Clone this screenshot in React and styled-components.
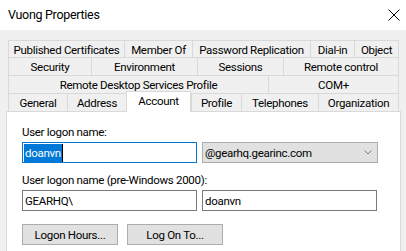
import React from 'react';
import styled, { createGlobalStyle } from 'styled-components';

const GlobalStyle = createGlobalStyle`
  html, body {
    margin: 0;
    padding: 0;
    background: #f0f0f0;
    overflow: hidden;
  }
  body {
    font-family: "Segoe UI", Roboto, "Liberation Sans", Arial, sans-serif;
    font-size: 12px;
    letter-spacing: -0.3px;
    color: #000000;
  }
`;

const Window = styled.div`
  width: 406px;
  height: 251px;
  display: flex;
  flex-direction: column;
  background: #f0f0f0;
  overflow: hidden;
`;

const TitleBar = styled.div`
  height: 30px;
  flex: 0 0 30px;
  display: flex;
  align-items: center;
  justify-content: space-between;
  background: #ffffff;
  padding: 0 6px 0 8px;
  box-sizing: border-box;
`;

const Title = styled.span`
  font-size: 12.5px;
  color: #000000;
  padding-bottom: 1px;
`;

const Body = styled.div`
  flex: 1;
  display: flex;
  flex-direction: column;
  padding: 10px 5px 0 6px;
`;

const TabStrip = styled.div`
  display: flex;
  flex-direction: column;
  margin: 0 2px;
`;

const TabRow = styled.div`
  display: flex;
  height: ${props => props.h}px;
`;

const Tab = styled.div`
  box-sizing: border-box;
  flex: ${props => (props.w ? `0 0 ${props.w}px` : '1 1 0')};
  display: flex;
  align-items: center;
  justify-content: center;
  border-top: 1px solid #d9d9d9;
  border-left: 1px solid #d9d9d9;
  border-right: ${props => (props.last ? '1px solid #d9d9d9' : 'none')};
  background: #f0f0f0;
  white-space: nowrap;
  font-size: 11.5px;
  padding-top: 1px;
`;

const ActiveTab = styled(Tab)`
  position: relative;
  z-index: 1;
  background: #ffffff;
  border-right: 1px solid #d9d9d9;
  margin-top: -2px;
  height: 21px;
  align-items: flex-start;
  padding-top: 2px;
`;

const Panel = styled.div`
  flex: 1;
  background: #ffffff;
  border: 1px solid #d9d9d9;
  border-bottom: none;
  padding: 13px 0 0 15px;
  display: flex;
  flex-direction: column;
`;

const Label = styled.div`
  height: 15px;
  line-height: 15px;
  margin-bottom: ${props => props.mb || 0}px;
  font-size: 11.5px;
`;

const FieldRow = styled.div`
  display: flex;
  gap: 5px;
  margin-bottom: ${props => props.mb || 0}px;
`;

const TextBox = styled.div`
  box-sizing: border-box;
  width: 175px;
  height: 21px;
  border: 1px solid ${props => (props.focused ? '#0078d7' : '#7a7a7a')};
  background: #ffffff;
  display: flex;
  align-items: center;
  padding: 0 1px;
  font-size: 11.5px;
`;

const Selected = styled.span`
  background: #0078d7;
  color: #ffffff;
  height: 18px;
  line-height: 18px;
  padding: 0 1px;
  border-right: 1px solid #000000;
`;

const Plain = styled.span`
  padding-left: 1px;
`;

const Combo = styled.div`
  box-sizing: border-box;
  width: 176px;
  height: 21px;
  border: 1px solid #adadad;
  background: #e1e1e1;
  display: flex;
  align-items: center;
  justify-content: space-between;
  padding: 0 5px 0 2px;
  font-size: 11.5px;
`;

const ButtonRow = styled.div`
  display: flex;
  gap: 9px;
`;

const Button = styled.div`
  box-sizing: border-box;
  width: 96px;
  height: 21px;
  border: 1px solid #adadad;
  background: #e1e1e1;
  display: flex;
  align-items: center;
  justify-content: center;
  font-size: 11.5px;
`;

const rows = [
  { h: 17, tabs: [['Published Certificates', 116], ['Member Of', 68], ['Password Replication', 118], ['Dial-in', 44], ['Object']] },
  { h: 18, tabs: [['Security', 83], ['Environment', 106], ['Sessions', 86], ['Remote control']] },
  { h: 18, tabs: [['Remote Desktop Services Profile', 260], ['COM+']] },
];

const bottomTabs = [['General', 59], ['Address', 59], ['Account', 65], ['Profile', 50], ['Telephones', 77], ['Organization']];

function CloseIcon() {
  return (
    <svg width="12" height="12" viewBox="0 0 12 12">
      <path d="M0.5 0.5 L11.5 11.5 M11.5 0.5 L0.5 11.5" stroke="#000" strokeWidth="1" fill="none" />
    </svg>
  );
}

function Chevron() {
  return (
    <svg width="8" height="5" viewBox="0 0 8 5">
      <path d="M0.5 0.5 L4 4 L7.5 0.5" stroke="#7a7a7a" strokeWidth="1" fill="none" />
    </svg>
  );
}

export default function App() {
  return (
    <Window>
      <GlobalStyle />
      <TitleBar>
        <Title>Vuong Properties</Title>
        <CloseIcon />
      </TitleBar>
      <Body>
        <TabStrip>
          {rows.map((row, i) => (
            <TabRow key={i} h={row.h}>
              {row.tabs.map(([name, w], j) => (
                <Tab key={name} w={w} last={j === row.tabs.length - 1}>{name}</Tab>
              ))}
            </TabRow>
          ))}
          <TabRow h={18}>
            {bottomTabs.map(([name, w], j) => (
              name === 'Account'
                ? <ActiveTab key={name} w={w}>{name}</ActiveTab>
                : <Tab key={name} w={w} last={j === bottomTabs.length - 1}>{name}</Tab>
            ))}
          </TabRow>
        </TabStrip>
        <Panel>
          <Label mb={2}>User logon name:</Label>
          <FieldRow mb={10}>
            <TextBox focused><Selected>doanvn</Selected></TextBox>
            <Combo>
              <span>@gearhq.gearinc.com</span>
              <Chevron />
            </Combo>
          </FieldRow>
          <Label mb={2}>User logon name (pre-Windows 2000):</Label>
          <FieldRow mb={13}>
            <TextBox><Plain>GEARHQ\</Plain></TextBox>
            <TextBox><Plain>doanvn</Plain></TextBox>
          </FieldRow>
          <ButtonRow>
            <Button>Logon Hours...</Button>
            <Button>Log On To...</Button>
          </ButtonRow>
        </Panel>
      </Body>
    </Window>
  );
}
